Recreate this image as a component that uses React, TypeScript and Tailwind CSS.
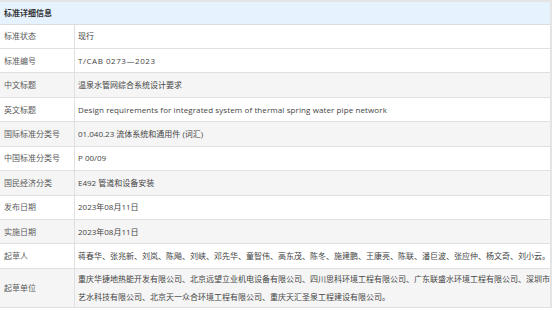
const rows: { label: string; value: string; track?: string }[] = [
  { label: '标准状态', value: '现行' },
  { label: '标准编号', value: 'T/CAB 0273—2023', track: 'tracking-[0.55px]' },
  { label: '中文标题', value: '温泉水管网综合系统设计要求' },
  {
    label: '英文标题',
    value: 'Design requirements for integrated system of thermal spring water pipe network',
    track: 'tracking-[0.1px]',
  },
  { label: '国际标准分类号', value: '01.040.23 流体系统和通用件 (词汇)' },
  { label: '中国标准分类号', value: 'P 00/09' },
  { label: '国民经济分类', value: 'E492 管道和设备安装' },
  { label: '发布日期', value: '2023年08月11日' },
  { label: '实施日期', value: '2023年08月11日' },
  {
    label: '起草人',
    value:
      '蒋春华、张兆新、刘岚、陈飚、刘峡、邓先华、童智伟、高东茂、陈冬、施建鹏、王康亮、陈联、潘巨波、张应仲、杨文奇、刘小云。',
  },
];

const units =
  '重庆华捷地热能开发有限公司、北京远望立业机电设备有限公司、四川思科环境工程有限公司、广东联盛水环境工程有限公司、深圳市艺水科技有限公司、北京天一众合环境工程有限公司、重庆天汇圣泉工程建设有限公司。';

// rows 3,5,7,9 and the last one are shaded
function shaded(i: number) {
  return i >= 2 && i % 2 === 0;
}

export default function App() {
  return (
    <div
      className="w-[554px] h-[311px] overflow-hidden bg-white text-[8px] text-[#444]"
      style={{ fontFamily: '"Open Sans", "Noto Sans CJK SC", sans-serif' }}
    >
      <div className="w-[552px] border-t-2 border-r-2 border-[#e4e4e4]">
        <div className="h-[22.5px] flex items-center pl-[4px] bg-[#e6f2fe] border-b border-[#dcdcdc] font-bold text-[#333]">
          标准详细信息
        </div>
        {rows.map((r, i) => (
          <div
            key={r.label}
            className={`flex h-[24.45px] border-b border-[#e0e0e0] ${shaded(i) ? 'bg-[#f5f5f5]' : 'bg-white'}`}
          >
            <div className="w-[75px] shrink-0 flex items-center pl-[4px] border-r border-[#e0e0e0] text-[#5a5a5a]">
              {r.label}
            </div>
            <div className={`flex-1 flex items-center pl-[3px] whitespace-nowrap overflow-hidden ${r.track ?? ''}`}>
              {r.value}
            </div>
          </div>
        ))}
        <div className="flex bg-[#f5f5f5] border-b border-[#e0e0e0]">
          <div className="w-[75px] shrink-0 flex items-center pl-[4px] border-r border-[#e0e0e0] text-[#5a5a5a]">
            起草单位
          </div>
          <div className="flex-1 pl-[3px] py-[1px] leading-[18px]">{units}</div>
        </div>
      </div>
    </div>
  );
}
